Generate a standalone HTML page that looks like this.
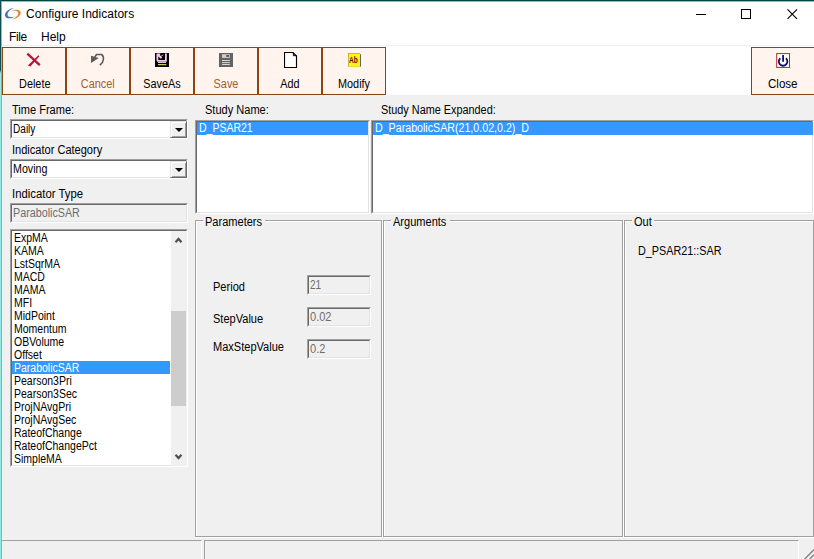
<!DOCTYPE html>
<html><head><meta charset="utf-8"><title>Configure Indicators</title>
<style>
*{box-sizing:border-box;margin:0;padding:0}
html,body{width:814px;height:559px;overflow:hidden;background:#f0f0f0}
body{position:relative;font-family:"Liberation Sans",sans-serif;font-size:12px;color:#000}
.abs{position:absolute}
.t{position:absolute;white-space:nowrap;line-height:13px;font-size:12px;transform:scaleX(.92);transform-origin:0 0}
.seg{position:absolute;white-space:nowrap;font-size:12px;line-height:16px}
#title{left:0;top:0;width:814px;height:46px;background:#fff}
#tool{left:0;top:45px;width:814px;height:50px;background:#fff;border-top:1px solid #f1f1f1}
#edgeT{left:0;top:0;width:814px;height:1px;background:#02433f}
#edgeT2{left:0;top:1px;width:814px;height:1px;background:#8cbdbd}
#edgeL{left:0;top:0;width:1px;height:559px;background:linear-gradient(#0e4f55 0,#0e4f55 70px,#96e8e4 73px,#96e8e4 100%)}
#edgeL2{left:1px;top:1px;width:1px;height:558px;background:linear-gradient(#8cbcc0 0,#8cbcc0 69px,#7ab8b6 72px,#7ab8b6 100%)}
#edgeL3{left:2px;top:73px;width:1px;height:486px;background:#ebf7f5}
.tb{position:absolute;top:47px;width:64px;height:48px;background:#fff5ee;border:1px solid #8b4513}
.tb span{position:absolute;left:0;right:0;top:29px;text-align:center;font-size:12px;line-height:14px;transform:scaleX(.905);transform-origin:50% 0}
.tb.dis span{color:#a0602c}
.sunk{position:absolute;background:#fff;border:1px solid;border-color:#a0a0a0 #fff #fff #a0a0a0}
.sunk:before{content:"";position:absolute;left:0;top:0;right:0;bottom:0;border:1px solid;border-color:#696969 #e3e3e3 #e3e3e3 #696969}
.sel{position:absolute;background:#3399ff}
.grp{position:absolute;border:1px solid #a0a0a0;box-shadow:1px 1px 0 #fff, inset 1px 1px 0 #fff}
.grp b{position:absolute;top:-4px;left:7px;height:8px;background:#f0f0f0}
.ddb{position:absolute;width:17px;height:17px;background:#f0f0f0;border:1px solid;border-color:#e3e3e3 #696969 #696969 #e3e3e3;box-shadow:inset 1px 1px 0 #fff, inset -1px -1px 0 #a0a0a0}
.ddb i{position:absolute;left:4px;top:6px;border:4px solid transparent;border-top:4px solid #000;border-bottom:0;width:0;height:0}
.li{position:absolute;left:3px;white-space:nowrap;line-height:13px;font-size:12px;transform:scaleX(.875);transform-origin:0 0}
.dis{color:#6d6d6d}
</style></head><body>
<div class="abs" id="title"></div>
<div class="abs" id="tool"></div>
<div class="abs" id="edgeT"></div>
<div class="abs" id="edgeT2"></div>
<div class="abs" id="edgeL"></div>
<div class="abs" id="edgeL2"></div>
<div class="abs" id="edgeL3"></div>

<!-- title -->
<svg class="abs" style="left:0;top:0" width="26" height="26" viewBox="0 0 26 26">
<path d="M14.500 7.800C8 8.600 4.300 13 5 15.800C5.800 19 10.500 19.300 15.200 16.200C11.500 17.600 8 17.400 7.600 15C7.300 12.500 10 9.500 14.500 7.800Z" fill="#3a78b8"/>
<path d="M11 11.200C14 9.200 19.800 8.800 20.700 12C21.300 15.200 17 18.800 12 19.900C15.800 17.600 18.600 15 18.200 12.700C17.800 10.600 14.500 10.200 11 11.200Z" fill="#e08838"/>
</svg>
<div class="seg" style="left:26px;top:6px;letter-spacing:.04px">Configure Indicators</div>
<svg class="abs" style="left:690px;top:2px" width="124" height="26" viewBox="0 0 124 26">
<path d="M6 12.500H16" stroke="#000" stroke-width="1" fill="none"/>
<rect x="51.500" y="7.500" width="9" height="9" stroke="#000" stroke-width="1" fill="none"/>
<path d="M97.500 7.300L107 16.800M107 7.300L97.500 16.800" stroke="#000" stroke-width="1.100" fill="none"/>
</svg>
<!-- menu -->
<div class="seg" style="left:9px;top:29px;letter-spacing:-.4px">File</div>
<div class="seg" style="left:41px;top:29px">Help</div>

<!-- toolbar buttons -->
<div class="tb" style="left:2px"><span style="left:.5px">Delete</span>
<svg class="abs" style="left:22px;top:4px" width="18" height="16" viewBox="0 0 18 16"><path d="M2.300 1.600L14.800 13.200" stroke="#b8143c" stroke-width="2.300" fill="none"/><path d="M13.400 3.300L14.400 4.200L5.400 14.600L2.800 13.400L9 7.600Z" fill="#b8143c"/></svg></div>
<div class="tb dis" style="left:66px"><span style="left:-1.500px">Cancel</span>
<svg class="abs" style="left:22px;top:4px" width="18" height="16" viewBox="0 0 18 16"><path d="M5.700 5.200L7.500 2.500H12.600C14.600 4 14.900 7 13.500 10.200L10.900 13.200" stroke="#5c5c5c" stroke-width="1.600" fill="none"/><path d="M2 3.800V10.900L9.800 6Z" fill="#5c5c5c"/></svg></div>
<div class="tb" style="left:130px"><span>SaveAs</span>
<svg class="abs" style="left:24px;top:5px" width="14" height="14" viewBox="0 0 14 14"><rect x="0" y="0" width="14" height="14" fill="#000"/><path d="M1.500 .6H5.600L4.800 2L7.200 4.400L5.900 5.700L3.300 3.400V7H10V.6H11.800V8.800H2.200L1.500 7Z" fill="#f3c9f3"/><path d="M5.300 3.700L8.300 1.900" stroke="#f3c9f3" stroke-width=".8"/><rect x="3" y="9.200" width="8" height=".8" fill="#fff"/><rect x="3" y="11.100" width="8.300" height="1.100" fill="#e6e65a"/></svg></div>
<div class="tb dis" style="left:194px"><span>Save</span>
<svg class="abs" style="left:24px;top:5px" width="14" height="14" viewBox="0 0 14 14"><rect x="0" y="0" width="14" height="14" fill="#636363"/><rect x="3" y="1.200" width="7.800" height="3.700" fill="#cfcfcf"/><rect x="7.200" y="2.100" width="2.800" height="1.700" fill="#4a4a4a"/><rect x="3" y="7" width="7.800" height=".9" fill="#e4e4e4"/><rect x="3" y="9.200" width="7.800" height=".9" fill="#e4e4e4"/><rect x="3" y="11.100" width="7.800" height=".9" fill="#e4e4e4"/></svg></div>
<div class="tb" style="left:258px"><span>Add</span>
<svg class="abs" style="left:25px;top:4px" width="14" height="17" viewBox="0 0 14 17"><path d="M0.500 0.500H9L12.500 4V15.500H0.500Z" fill="#fff" stroke="#000" stroke-width="1.150"/><path d="M9.300 0.500V3.700H12.500" fill="none" stroke="#000" stroke-width="1"/></svg></div>
<div class="tb" style="left:322px"><span>Modify</span>
<svg class="abs" style="left:25px;top:5px" width="14" height="15" viewBox="0 0 14 15"><rect x="11.500" y="1.200" width="1.400" height="12.500" fill="#55554a"/><rect x="0" y="0" width="12" height="13.700" fill="#9a9a50"/><rect x=".6" y=".6" width="11.400" height="13.100" fill="#fff41a"/><text x="1" y="9.900" font-family="Liberation Sans, sans-serif" font-size="8.800" font-weight="bold" fill="#6a0808" textLength="8.800" lengthAdjust="spacingAndGlyphs">Ab</text></svg></div>
<div class="tb" style="left:751px;width:63px;border-right:0"><span style="left:-1.500px;transform:scaleX(.965)">Close</span>
<svg class="abs" style="left:24px;top:5px" width="15" height="16" viewBox="0 0 15 16"><rect x=".7" y=".6" width="12.800" height="13.800" fill="#fff" stroke="#b3262b" stroke-width="1"/><path d="M4.300 5.200A4.300 4.300 0 1 0 9.900 5.200" stroke="#0d0d74" stroke-width="1.800" fill="none"/><path d="M7.100 2.100V8.700" stroke="#0d0d74" stroke-width="1.800"/></svg></div>

<!-- left column -->
<div class="t" style="left:12px;top:104px">Time Frame:</div>
<div class="sunk" style="left:10px;top:119px;width:178px;height:20px"><div class="t" style="left:2px;top:3px;transform:scaleX(.84)">Daily</div><div class="ddb" style="right:0;top:1px"><i></i></div></div>
<div class="t" style="left:12px;top:144px">Indicator Category</div>
<div class="sunk" style="left:10px;top:159px;width:178px;height:20px"><div class="t" style="left:2px;top:3px;transform:scaleX(.89)">Moving</div><div class="ddb" style="right:0;top:1px"><i></i></div></div>
<div class="t" style="left:12px;top:188px;transform:scaleX(.945)">Indicator Type</div>
<div class="sunk" style="left:10px;top:203px;width:178px;height:20px;background:#f0f0f0"><div class="t dis" style="left:2px;top:3px;transform:scaleX(.895)">ParabolicSAR</div></div>

<div class="sunk" id="lb" style="left:10px;top:229px;width:178px;height:238px;overflow:hidden">
<div class="abs" style="left:160px;top:1px;width:17px;height:235px;background:#f0f0f0"></div>
<div class="abs" style="left:160px;top:81px;width:15px;height:95px;background:#cdcdcd"></div>
<svg class="abs" style="left:160px;top:1px" width="17" height="235" viewBox="0 0 17 235"><path d="M4.500 11.300L7.500 8L10.500 11.300" stroke="#505050" stroke-width="2.200" fill="none"/><path d="M4.500 223.800L7.500 227.100L10.500 223.800" stroke="#505050" stroke-width="2.200" fill="none"/></svg>
<div class="sel" style="left:1px;top:131px;width:158px;height:13px"></div>
<div class="li" style="top:2px">ExpMA</div>
<div class="li" style="top:15px">KAMA</div>
<div class="li" style="top:28px">LstSqrMA</div>
<div class="li" style="top:41px">MACD</div>
<div class="li" style="top:54px">MAMA</div>
<div class="li" style="top:67px">MFI</div>
<div class="li" style="top:80px">MidPoint</div>
<div class="li" style="top:93px">Momentum</div>
<div class="li" style="top:106px">OBVolume</div>
<div class="li" style="top:119px">Offset</div>
<div class="li" style="top:132px;color:#fff">ParabolicSAR</div>
<div class="li" style="top:145px">Pearson3Pri</div>
<div class="li" style="top:158px">Pearson3Sec</div>
<div class="li" style="top:171px">ProjNAvgPri</div>
<div class="li" style="top:184px">ProjNAvgSec</div>
<div class="li" style="top:197px">RateofChange</div>
<div class="li" style="top:210px">RateofChangePct</div>
<div class="li" style="top:223px">SimpleMA</div>
</div>

<!-- study name lists -->
<div class="t" style="left:205px;top:104px">Study Name:</div>
<div class="sunk" style="left:195px;top:120px;width:175px;height:94px"><div class="sel" style="left:1px;top:1px;right:1px;height:13px"></div><div class="li" style="left:3px;top:1px;color:#fff">D_PSAR21</div></div>
<div class="t" style="left:381px;top:104px;transform:scaleX(.905)">Study Name Expanded:</div>
<div class="sunk" style="left:371px;top:120px;width:443px;height:94px"><div class="sel" style="left:1px;top:1px;right:0;height:13px"></div><div class="li" style="left:3px;top:1px;color:#fff;transform:scaleX(.888)">D_ParabolicSAR(21,0.02,0.2)_D</div></div>

<!-- group boxes -->
<div class="grp" style="left:195px;top:220px;width:187px;height:317px"><b style="width:62px"></b></div>
<div class="grp" style="left:383px;top:220px;width:240px;height:317px"><b style="width:59px"></b></div>
<div class="grp" style="left:624px;top:220px;width:190px;height:317px"><b style="width:22px"></b></div>
<div class="t" style="left:205px;top:216px">Parameters</div>
<div class="t" style="left:393px;top:216px">Arguments</div>
<div class="t" style="left:634px;top:216px">Out</div>

<div class="t" style="left:213px;top:281px">Period</div>
<div class="t" style="left:213px;top:313px">StepValue</div>
<div class="t" style="left:213px;top:341px">MaxStepValue</div>
<div class="sunk" style="left:307px;top:275px;width:64px;height:20px;background:#f0f0f0"><div class="t dis" style="left:1.500px;top:3px;transform:scaleX(.84)">21</div></div>
<div class="sunk" style="left:307px;top:307px;width:64px;height:20px;background:#f0f0f0"><div class="t dis" style="left:1.500px;top:3px">0.02</div></div>
<div class="sunk" style="left:307px;top:339px;width:64px;height:20px;background:#f0f0f0"><div class="t dis" style="left:1.500px;top:3px">0.2</div></div>
<div class="t" style="left:638px;top:245px;transform:scaleX(.9)">D_PSAR21::SAR</div>

<!-- status bar -->
<div class="abs" style="left:2px;top:540px;width:200px;height:19px;border-top:1px solid #a0a0a0;border-right:1px solid #fff"></div>
<div class="abs" style="left:204px;top:540px;width:595px;height:19px;border:1px solid #a0a0a0;border-bottom:0;border-right-color:#fff"></div>
<svg class="abs" style="left:800px;top:545px" width="14" height="14" viewBox="0 0 14 14"><path d="M3.300 14L14 3.300M8.300 14L14 8.300M13.300 14L14 13.300" stroke="#fff" stroke-width="1.200" fill="none"/><path d="M4.600 14L14 4.600M9.600 14L14 9.600M14.400 14L14 14.400" stroke="#8c8c8c" stroke-width="1.700" fill="none"/></svg>
</body></html>
